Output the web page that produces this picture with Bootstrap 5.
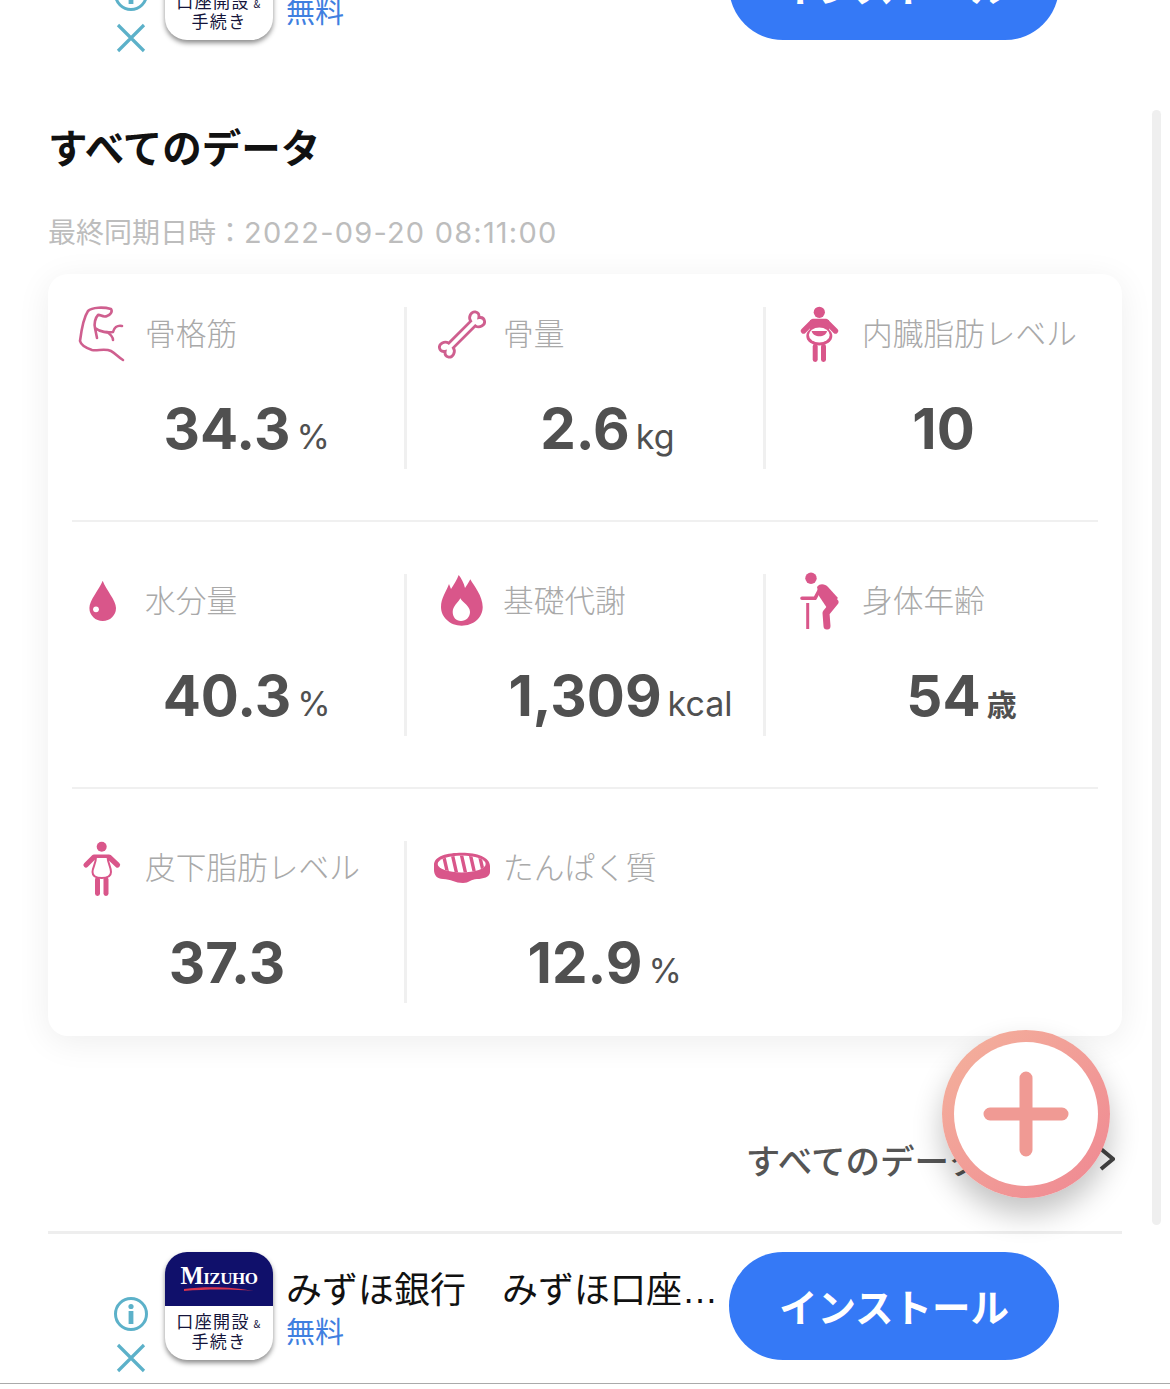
<!DOCTYPE html>
<html lang="ja">
<head>
<meta charset="utf-8">
<title>すべてのデータ</title>
<link href="https://cdn.jsdelivr.net/npm/bootstrap@5.3.0/dist/css/bootstrap.min.css" rel="stylesheet">
<style>
html,body{margin:0;background:#fff;overflow:hidden;}
body{font-family:"Noto Sans CJK JP","Liberation Sans",sans-serif;}
.screen{position:relative;width:1170px;height:1389px;overflow:hidden;}
.adbar{height:131px;padding-left:113px;}
.adbar-top{margin-top:-68px;}
.adbar-bottom{border-bottom:1px solid #aaa;height:132px;margin-top:18px;}
.ad-ctl{width:36px;margin-top:44px;gap:11px;margin-right:16px;}
.ad-tile{width:108px;height:108px;border-radius:22px;overflow:hidden;background:#fff;box-shadow:0 3px 5px rgba(0,0,0,.45);flex:none;}
.tile-top{height:54px;background:#10106b;color:#fff;text-align:center;}
.tile-logo{font-family:"Liberation Serif",serif;font-weight:700;font-variant:small-caps;font-size:24.5px;line-height:20px;padding-top:14px;letter-spacing:-.5px;height:34px;}
.tile-low{color:#14143a;font-size:17px;line-height:20px;text-align:center;padding-top:5px;letter-spacing:1.4px;}
.tile-low small{font-size:10px;line-height:0;}
.ad-copy{width:436px;margin:0 7px 0 13px;}
.ad-title{font-family:"Liberation Sans","Noto Sans CJK JP",sans-serif;font-size:36px;line-height:44px;color:#111;margin-top:17px;}
.ad-price{font-size:29px;line-height:34px;color:#3f7fe0;margin-top:0;}
.ad-install{width:330px;height:108px;border:0;border-radius:54px;background:#3579f6;color:#fff;font-size:38.5px;font-weight:700;padding:0;flex:none;}
.sheet{margin:0 48px;width:1074px;}
.sheet-title{font-size:39.5px;font-weight:700;line-height:46px;color:#111;margin:60px 0 0 0;}
.sync{font-size:28px;line-height:34px;color:#bdbdbd;margin-top:45px;white-space:nowrap;}
.sync b{font-family:Inter,sans-serif;font-weight:400;font-size:29px;letter-spacing:1.2px;}
.metrics{margin-top:24px;height:762px;border-radius:20px;background:#fff;box-shadow:0 6px 34px rgba(0,0,0,.07);padding-top:33px;}
.metric{position:relative;height:162px;padding-left:24px;}
.metric:nth-child(3){padding-left:25px;}
.metric-sep::after{content:"";position:absolute;right:-1px;top:0;bottom:0;width:3px;background:#f0f0f0;}
.metric-sep:nth-child(2)::after{right:-2px;}
.metric-head{height:54px;}
.metric-head svg{width:62px;height:62px;flex:none;}
.metric-name{font-size:30.7px;font-weight:300;color:#a9a9a9;margin-left:11px;line-height:54px;white-space:nowrap;padding-bottom:4px;}
.metric-value{margin:33px 0 0 -24px;text-align:center;font-family:Inter,"Liberation Sans",sans-serif;font-weight:700;font-size:56.5px;letter-spacing:0;line-height:70px;color:#505050;}
.metric-unit{display:inline-block;width:0;margin:0 -6px 0 6px;font-size:34px;font-weight:400;letter-spacing:0;white-space:nowrap;text-align:left;}
.metric-unit.kanji{font-family:"Noto Sans CJK JP",sans-serif;font-weight:700;font-size:30px;}
.metric-rule{height:2px;background:#f0f0f0;margin:51px 24px 52px;}
.more{margin-top:93px;padding-right:7px;height:60px;color:#555;font-size:34.5px;font-weight:500;line-height:60px;}
.more svg{margin-left:12px;}
.sheet-rule{height:3px;background:#eee;margin-top:42px;}
.plus-btn{position:absolute;left:942px;top:1030px;width:168px;height:168px;border-radius:50%;border:0;padding:0;background:linear-gradient(135deg,#f4b29c,#ef8792);box-shadow:0 16px 30px rgba(0,0,0,.24);}
.plus-btn::before{content:"";position:absolute;inset:12px;border-radius:50%;background:#fff;}
.plus-btn svg{position:absolute;left:41px;top:41px;}
.scroll-thumb{position:absolute;left:1152px;top:110px;width:9px;height:1115px;border-radius:5px;background:#efefef;}
</style>
</head>
<body>
<div class="screen">

  <div class="adbar adbar-top d-flex align-items-start">
    <div class="ad-ctl d-flex flex-column align-items-center">
      <svg width="36" height="36" viewBox="0 0 36 36"><circle cx="18" cy="18" r="15.5" fill="none" stroke="#5cb1c9" stroke-width="3"/><circle cx="18" cy="10.5" r="2.6" fill="#5cb1c9"/><rect x="15.6" y="15" width="4.8" height="13" fill="#5cb1c9"/></svg>
      <svg width="30" height="30" viewBox="0 0 30 30"><path d="M2 2L28 28M28 2L2 28" stroke="#5cb1c9" stroke-width="3.2" fill="none"/></svg>
    </div>
    <div class="ad-tile">
      <div class="tile-top"><div class="tile-logo">Mizuho</div><svg class="d-block mx-auto" width="74" height="6" viewBox="0 0 74 6"><path d="M2 3C24 0 52 1 72 5C52 3 24 3 2 5Z" fill="#d8344e"/></svg></div>
      <div class="tile-low">口座開設<small> &amp;</small><br>手続き</div>
    </div>
    <div class="ad-copy">
      <div class="ad-title text-truncate">みずほ銀行　みずほ口座開設アプリ</div>
      <div class="ad-price">無料</div>
    </div>
    <button class="ad-install" type="button">インストール</button>
  </div>

  <main class="sheet">
    <h1 class="sheet-title">すべてのデータ</h1>
    <div class="sync">最終同期日時：<b>2022-09-20 08:11:00</b></div>

    <section class="metrics">
      <div class="row g-0">
        <div class="col-4 metric metric-sep">
          <div class="metric-head d-flex align-items-center">
            <svg viewBox="0 0 62 62" fill="none" stroke="#cf5f8f" stroke-width="2.6" stroke-linecap="round" stroke-linejoin="round"><path d="M51 57C46 54 43 50 39 48C33 45 26 48 20 47C14 45 9 42 8 38C9 30 12 14 16 8C20 4 32 4 39 6C41 9 38 12 35 13C31 15 28 11 26 12C23 15 22 21 23 25C28 29 36 30 41 29C42 25 45 22 50 23M35 29C38 31 41 33 41 37M23 25L25 35"/></svg>
            <span class="metric-name">骨格筋</span>
          </div>
          <div class="metric-value">34.3<span class="metric-unit">%</span></div>
        </div>
        <div class="col-4 metric metric-sep">
          <div class="metric-head d-flex align-items-center">
            <svg viewBox="0 0 62 62"><g transform="translate(32 31.5) rotate(-45) scale(.82)"><path d="M-19-4H19C20-10 28-12 31-8C33-5 32-2 29 0C32 2 33 5 31 8C28 12 20 10 19 4H-19C-20 10-28 12-31 8C-33 5-32 2-29 0C-32-2-33-5-31-8C-28-12-20-10-19-4Z" fill="none" stroke="#cf5f8f" stroke-width="3.4"/></g></svg>
            <span class="metric-name">骨量</span>
          </div>
          <div class="metric-value">2.6<span class="metric-unit">kg</span></div>
        </div>
        <div class="col-4 metric">
          <div class="metric-head d-flex align-items-center">
            <svg viewBox="0 0 62 62"><circle cx="30.3" cy="9.3" r="5.6" fill="#d9568a"/><path d="M14.5 28L24 18.5H37L46.5 28" fill="none" stroke="#d9568a" stroke-width="5.4" stroke-linecap="round" stroke-linejoin="round"/><path d="M21 17H40V28H21Z" fill="#d9568a"/><ellipse cx="30.3" cy="33" rx="13" ry="9.6" fill="#d9568a"/><ellipse cx="30.3" cy="32" rx="10.4" ry="7.6" fill="#fff"/><path d="M22.6 28H38C37 35 24 35 22.6 28Z" fill="#d9568a"/><rect x="23.7" y="41" width="5" height="18" rx="2.4" fill="#d9568a"/><rect x="32" y="41" width="5" height="18" rx="2.4" fill="#d9568a"/></svg>
            <span class="metric-name">内臓脂肪レベル</span>
          </div>
          <div class="metric-value">10</div>
        </div>
      </div>
      <div class="metric-rule"></div>
      <div class="row g-0">
        <div class="col-4 metric metric-sep">
          <div class="metric-head d-flex align-items-center">
            <svg viewBox="0 0 62 62"><path d="M30.7 10.7C34 20 44 30 44 38A13.3 13 0 0 1 17.4 38C17.4 30 27 20 30.7 10.7Z" fill="#d9568a"/><circle cx="24" cy="39.3" r="2.9" fill="#fff"/></svg>
            <span class="metric-name">水分量</span>
          </div>
          <div class="metric-value">40.3<span class="metric-unit">%</span></div>
        </div>
        <div class="col-4 metric metric-sep">
          <div class="metric-head d-flex align-items-center">
            <svg viewBox="0 0 62 62"><path d="M28.7 5C31 8 34 13 35 18C37 15 39 12 40.3 9.3C44 16 52.7 26 52.7 37C52.7 48 43 55.7 31.7 55.7C20 55.7 11 47 11 37C11 28 16 22 19 14L21 19C24 14 27 10 28.7 5Z" fill="#d9568a"/><path d="M30.3 28.3C33 33 40 36 40 42C40 47 36 51 31 51C26 51 22.7 47 22.7 42C22.7 36 28 33 30.3 28.3Z" fill="#fff"/></svg>
            <span class="metric-name">基礎代謝</span>
          </div>
          <div class="metric-value">1,309<span class="metric-unit">kcal</span></div>
        </div>
        <div class="col-4 metric">
          <div class="metric-head d-flex align-items-center">
            <svg viewBox="0 0 62 62"><circle cx="22" cy="8.3" r="5.7" fill="#d9568a"/><path d="M13 28.3H26L31 19" fill="none" stroke="#d9568a" stroke-width="3.6" stroke-linecap="round" stroke-linejoin="round"/><path d="M34 19L46 32L37 43L38 56" fill="none" stroke="#d9568a" stroke-width="7" stroke-linecap="round" stroke-linejoin="round"/><path d="M28 17C31 13 36 14 39 17L49 28L38 38L30 26Z" fill="#d9568a"/><rect x="17.2" y="33" width="3" height="26" fill="#d9568a"/></svg>
            <span class="metric-name">身体年齢</span>
          </div>
          <div class="metric-value">54<span class="metric-unit kanji">歳</span></div>
        </div>
      </div>
      <div class="metric-rule"></div>
      <div class="row g-0">
        <div class="col-4 metric metric-sep">
          <div class="metric-head d-flex align-items-center">
            <svg viewBox="0 0 62 62"><circle cx="29.7" cy="9.7" r="5" fill="#d9568a"/><path d="M14 28L22 20H37L45.5 28" fill="none" stroke="#d9568a" stroke-width="5.2" stroke-linecap="round" stroke-linejoin="round"/><path d="M24 20H35.5C36 27 39 30 39 35C39 39 35 41 29.7 41C24 41 20.5 39 20.5 35C20.5 30 24 27 24 20Z" fill="#fff" stroke="#d9568a" stroke-width="2"/><rect x="23" y="40" width="5" height="19" rx="2.4" fill="#d9568a"/><rect x="31.5" y="40" width="5" height="19" rx="2.4" fill="#d9568a"/></svg>
            <span class="metric-name">皮下脂肪レベル</span>
          </div>
          <div class="metric-value">37.3</div>
        </div>
        <div class="col-4 metric">
          <div class="metric-head d-flex align-items-center">
            <svg viewBox="0 0 62 62"><defs><clipPath id="fatcut"><ellipse cx="31.7" cy="27" rx="24" ry="8.5"/></clipPath></defs><path d="M4 28C4 19 17 15.7 32 15.7C47 15.7 60 20 60 29V35C60 40 53 42 47 42C41 42 39 46 33 46C25 46 21 42 13 42C7 42 4 38 4 33Z" fill="#d9568a"/><ellipse cx="31.7" cy="27" rx="24" ry="8.5" fill="#fff"/><g clip-path="url(#fatcut)" stroke="#d9568a" stroke-width="3.4"><path d="M13 16L18 38M22 16L27 38M31 16L36 38M40 16L45 38M49 16L54 38"/></g></svg>
            <span class="metric-name">たんぱく質</span>
          </div>
          <div class="metric-value">12.9<span class="metric-unit">%</span></div>
        </div>
        <div class="col-4"></div>
      </div>
    </section>

    <a class="more d-flex justify-content-end align-items-center text-decoration-none" href="#">すべてのデータを見る<svg width="16" height="24" viewBox="0 0 16 24"><path d="M2 2L14 12L2 22" fill="none" stroke="#444" stroke-width="4"/></svg></a>
    <div class="sheet-rule"></div>
  </main>

  <div class="adbar adbar-bottom d-flex align-items-start">
    <div class="ad-ctl d-flex flex-column align-items-center">
      <svg width="36" height="36" viewBox="0 0 36 36"><circle cx="18" cy="18" r="15.5" fill="none" stroke="#5cb1c9" stroke-width="3"/><circle cx="18" cy="10.5" r="2.6" fill="#5cb1c9"/><rect x="15.6" y="15" width="4.8" height="13" fill="#5cb1c9"/></svg>
      <svg width="30" height="30" viewBox="0 0 30 30"><path d="M2 2L28 28M28 2L2 28" stroke="#5cb1c9" stroke-width="3.2" fill="none"/></svg>
    </div>
    <div class="ad-tile">
      <div class="tile-top"><div class="tile-logo">Mizuho</div><svg class="d-block mx-auto" width="74" height="6" viewBox="0 0 74 6"><path d="M2 3C24 0 52 1 72 5C52 3 24 3 2 5Z" fill="#d8344e"/></svg></div>
      <div class="tile-low">口座開設<small> &amp;</small><br>手続き</div>
    </div>
    <div class="ad-copy">
      <div class="ad-title text-truncate">みずほ銀行　みずほ口座開設アプリ</div>
      <div class="ad-price">無料</div>
    </div>
    <button class="ad-install" type="button">インストール</button>
  </div>

  <button class="plus-btn" type="button" aria-label="追加"><svg width="86" height="86" viewBox="0 0 86 86"><path d="M7 43H79M43 7V79" stroke="#f09a94" stroke-width="13" stroke-linecap="round" fill="none"/></svg></button>
  <div class="scroll-thumb"></div>
</div>
<script src="https://cdn.jsdelivr.net/npm/bootstrap@5.3.0/dist/js/bootstrap.bundle.min.js"></script>
</body>
</html>
